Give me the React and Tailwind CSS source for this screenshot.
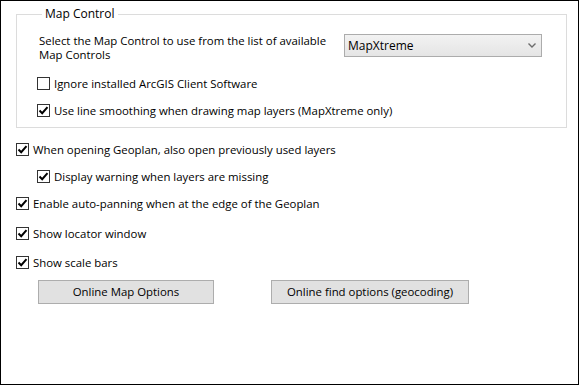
import React from 'react';

function Check({ checked }) {
  return (
    <span className="flex h-[13px] w-[13px] shrink-0 items-center justify-center border border-[#333333] bg-white">
      {checked && (
        <svg width="11" height="11" viewBox="0 0 11 11">
          <path d="M1.5 5.5 L4.2 8.2 L9.5 2.2" fill="none" stroke="#000" strokeWidth="2" />
        </svg>
      )}
    </span>
  );
}

function Option({ checked, children, className = '' }) {
  return (
    <label className={`flex items-center gap-[4px] leading-[15px] ${className}`}>
      <Check checked={checked} />
      <span>{children}</span>
    </label>
  );
}

function Button({ children, className = '' }) {
  return (
    <button className={`h-[24px] border border-[#adadad] bg-[#e1e1e1] text-black leading-none ${className}`}>
      {children}
    </button>
  );
}

export default function App() {
  return (
    <div
      className="h-[385px] w-[579px] border border-black bg-white text-[11.4px] text-black"
      style={{ fontFamily: '"Open Sans", "Noto Sans", sans-serif' }}
    >
      <fieldset className="ml-[15px] mt-[6px] h-[121px] w-[551px] border border-[#dcdcdc] pl-[20px]">
        <legend className="ml-[5px] px-[3px] text-[12px] leading-[14px]">Map Control</legend>

        <div className="mt-[13px] flex items-start">
          <p className="ml-[2px] w-[305px] leading-[14px]">
            Select the Map Control to use from the list of available
            <br />
            Map Controls
          </p>
          <div className="flex h-[23px] w-[198px] items-center justify-between border border-[#acacac] bg-gradient-to-b from-[#f2f2f2] to-[#e5e5e5] pl-[3px] pr-[5px]">
            <span className="text-[12px]">MapXtreme</span>
            <svg width="8" height="5" viewBox="0 0 8 5">
              <path d="M0.5 0.5 L4 4 L7.5 0.5" fill="none" stroke="#6d6d6d" strokeWidth="1.4" />
            </svg>
          </div>
        </div>

        <Option className="mt-[14px]">Ignore installed ArcGIS Client Software</Option>
        <Option checked className="mt-[12px]">
          Use line smoothing when drawing map layers (MapXtreme only)
        </Option>
      </fieldset>

      <div className="flex flex-col pl-[15px]">
        <Option checked className="mt-[14px]">
          When opening Geoplan, also open previously used layers
        </Option>
        <Option checked className="ml-[21px] mt-[12px]">
          Display warning when layers are missing
        </Option>
        <Option checked className="mt-[12px]">
          Enable auto-panning when at the edge of the Geoplan
        </Option>
        <Option checked className="mt-[15px]">Show locator window</Option>
        <Option checked className="mt-[14px]">Show scale bars</Option>

        <div className="mt-[10px] flex">
          <Button className="ml-[22px] w-[176px]">Online Map Options</Button>
          <Button className="ml-[57px] w-[198px]">Online find options (geocoding)</Button>
        </div>
      </div>
    </div>
  );
}
